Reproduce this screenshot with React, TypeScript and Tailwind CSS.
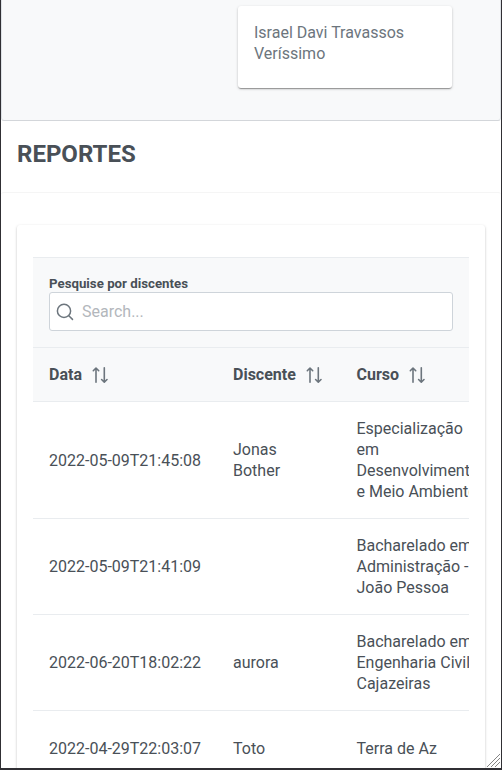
const cardShadow =
  'shadow-[0_2px_1px_-1px_rgba(0,0,0,0.2),0_1px_1px_0_rgba(0,0,0,0.14),0_1px_3px_0_rgba(0,0,0,0.2)]';

const rows = [
  { date: '2022-05-09T21:45:08', student: 'Jonas Bother', course: ['Especialização', 'em', 'Desenvolvimento', 'e Meio Ambiente'] },
  { date: '2022-05-09T21:41:09', student: '', course: ['Bacharelado em', 'Administração -', 'João Pessoa'] },
  { date: '2022-06-20T18:02:22', student: 'aurora', course: ['Bacharelado em', 'Engenharia Civil -', 'Cajazeiras'] },
  { date: '2022-04-29T22:03:07', student: 'Toto', course: ['Terra de Az'] },
];

function SortIcon() {
  return (
    <svg className="ml-[9px] h-[18px] w-[18px] shrink-0" viewBox="0 0 18 18" fill="none" stroke="#6c757d" strokeWidth="1.6" strokeLinecap="round" strokeLinejoin="round">
      <path d="M5 16.3V2.2M2.3 4.7 5 2l2.7 2.7M13.3 1.8v14.3M10.6 13.5l2.7 2.7 2.7-2.7" />
    </svg>
  );
}

function SearchIcon() {
  return (
    <svg className="mr-2 h-[18px] w-[18px]" viewBox="0 0 18 18" fill="none" stroke="#6c757d" strokeWidth="1.5" strokeLinecap="round">
      <circle cx="8" cy="7.9" r="6.6" />
      <path d="m12.8 12.8 3.7 3.6" />
    </svg>
  );
}

function HeaderCell({ label }: { label: string }) {
  return (
    <div className="flex items-center py-4 pl-4 font-bold">
      <span>{label}</span>
      <SortIcon />
    </div>
  );
}

const columns = 'grid w-[600px] grid-cols-[184px_123.5px_1fr] border-b border-[#e9ecef]';

export default function App() {
  return (
    <div className="relative h-[770px] w-[502px] overflow-hidden border-x border-b-2 border-[#302f34] bg-white font-[Roboto,sans-serif] text-base leading-[21px] text-[#495057]">
      <section className="flex h-[121px] justify-end rounded-b-[3px] border-x border-b border-[#dee2e6] border-b-[#d3d6da] bg-[#f8f9fa] pt-1.5 pr-12">
        <div className={`h-[82px] w-[214px] rounded-[3px] bg-white p-4 text-[#6c757d] ${cardShadow}`}>
          Israel Davi Travassos Veríssimo
        </div>
      </section>
      <header className="h-[71px] px-4 pt-[17px]">
        <h1 className="text-2xl leading-8 font-bold">REPORTES</h1>
      </header>
      <main className="h-[600px] rounded-[3px] border-t border-[#f5f5f5] px-4 pt-8">
        <section className={`h-[600px] rounded-[3px] bg-white px-4 pt-8 ${cardShadow}`}>
          <div className="w-[436px] overflow-hidden border-t border-[#e9ecef]">
            <div className="h-[90px] border-b border-[#e9ecef] bg-[#f8f9fa] px-4 pt-4">
              <label className="block h-[18px] text-[13.28px] leading-[19px] font-bold">Pesquise por discentes</label>
              <div className="flex h-[39px] items-center rounded-[3px] border border-[#ced4da] bg-white pl-1.5">
                <SearchIcon />
                <span className="text-[#b3b7bc]">Search...</span>
              </div>
            </div>
            <div className={`${columns} bg-[#f8f9fa]`}>
              <HeaderCell label="Data" />
              <HeaderCell label="Discente" />
              <HeaderCell label="Curso" />
            </div>
            {rows.map((row) => (
              <div key={row.date} className={`${columns} min-h-[75px] items-center`}>
                <div className="py-4 pl-4">{row.date}</div>
                <div className="px-4 py-4">{row.student}</div>
                <div className="py-4 pl-4">
                  {row.course.map((line) => (
                    <div key={line} className="whitespace-nowrap">{line}</div>
                  ))}
                </div>
              </div>
            ))}
          </div>
        </section>
      </main>
      <svg className="absolute right-0 bottom-0 h-[15px] w-[15px]" viewBox="0 0 15 15" fill="none" stroke="#858585" strokeWidth="1">
        <path d="M1 14 14 1M5 14l9-9M9 14l5-5" />
      </svg>
    </div>
  );
}
